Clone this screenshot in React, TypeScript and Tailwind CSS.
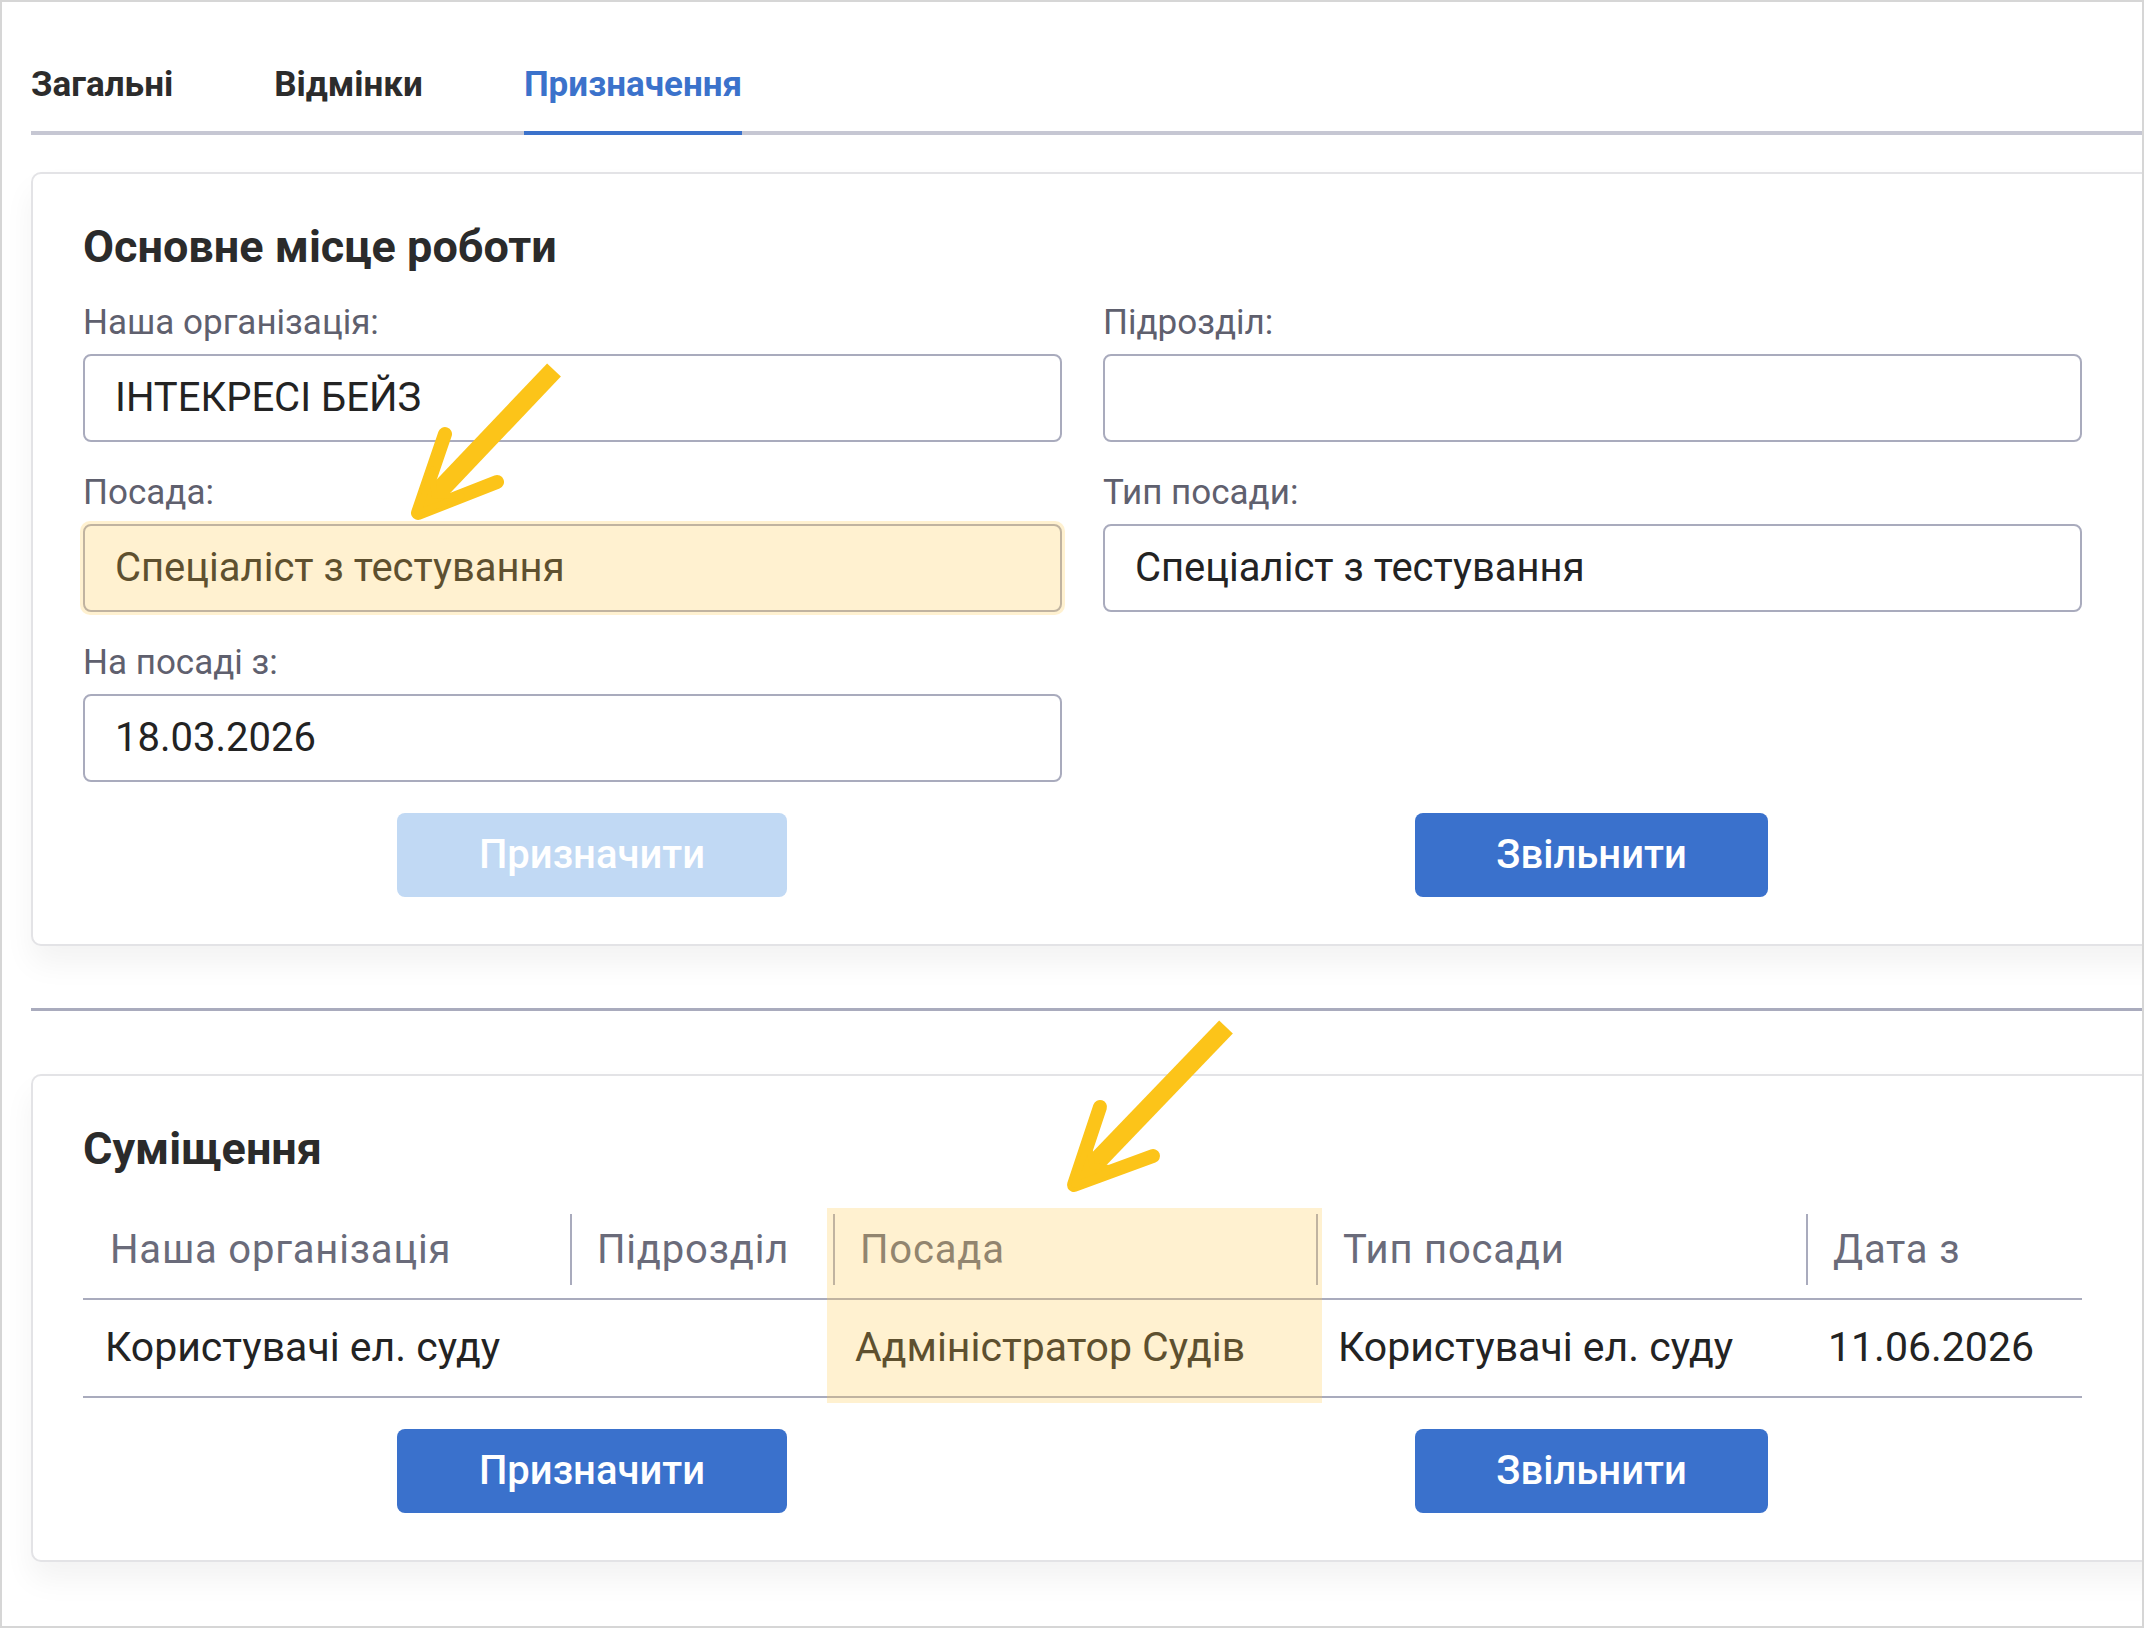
import React from "react";

type Field = { label: string; value: string; marked?: boolean };

function FieldBox({ label, value, marked }: Field) {
  return (
    <div className="flex flex-col">
      <div className="text-[35px] leading-[38px] text-[#5f606e]">{label}</div>
      <div className="relative mt-[12px]">
        <div className="h-[88px] rounded-[8px] border-2 border-[#a9abbd] bg-white px-[30px] flex items-center text-[40px] text-[#232323]">
          {value}
        </div>
        {marked && (
          <div className="absolute -inset-[3px] rounded-[10px] bg-[rgba(255,205,80,0.27)] pointer-events-none" />
        )}
      </div>
    </div>
  );
}

function Buttons({ assignDisabled }: { assignDisabled?: boolean }) {
  return (
    <div className="w-[1999px] flex justify-around">
      <button
        className={
          assignDisabled
            ? "w-[390px] h-[84px] rounded-[8px] bg-[#c1d9f4] text-white text-[40px] font-medium"
            : "w-[390px] h-[84px] rounded-[8px] bg-[#3a71cc] text-white text-[40px] font-medium"
        }
      >
        Призначити
      </button>
      <button className="w-[353px] h-[84px] rounded-[8px] bg-[#3a71cc] text-white text-[40px] font-medium">
        Звільнити
      </button>
    </div>
  );
}

const cols = "grid grid-cols-[487px_263px_483px_490px_276px]";
const heads = ["Наша організація", "Підрозділ", "Посада", "Тип посади", "Дата з"];
const row = ["Користувачі ел. суду", "", "Адміністратор Судів", "Користувачі ел. суду", "11.06.2026"];

function Arrow({ top, tip, left, right }: { top: [number, number]; tip: [number, number]; left: [number, number]; right: [number, number] }) {
  const neck: [number, number] = [tip[0] + (top[0] - tip[0]) * 0.12, tip[1] + (top[1] - tip[1]) * 0.12];
  return (
    <g fill="#fcc419" stroke="#fcc419">
      <path d={`M${top[0]} ${top[1]} L${neck[0]} ${neck[1]}`} strokeWidth={19} strokeLinecap="butt" fill="none" />
      <path
        d={`M${left[0]} ${left[1]} L${tip[0]} ${tip[1]} L${right[0]} ${right[1]}`}
        strokeWidth={14}
        strokeLinecap="round"
        strokeLinejoin="round"
        fill="none"
      />
      <path
        d={`M${tip[0]} ${tip[1]} L${tip[0] + (left[0] - tip[0]) * 0.55} ${tip[1] + (left[1] - tip[1]) * 0.55} L${neck[0]} ${neck[1]} L${tip[0] + (right[0] - tip[0]) * 0.55} ${tip[1] + (right[1] - tip[1]) * 0.55} Z`}
        strokeWidth={6}
        strokeLinejoin="round"
      />
    </g>
  );
}

export default function App() {
  return (
    <div className="relative w-[2144px] h-[1628px] overflow-hidden bg-white border-2 border-[#d6d6d6] font-['Roboto',sans-serif]">
      {/* tabs */}
      <div className="ml-[29px] mt-[65px] flex border-b-4 border-[#c6c7d3]">
        <div className="mr-[101px] -mb-1 pb-[28px] border-b-4 border-transparent text-[35px] leading-[36px] font-bold text-[#2c2c2c]">
          Загальні
        </div>
        <div className="mr-[101px] -mb-1 pb-[28px] border-b-4 border-transparent text-[35px] leading-[36px] font-bold text-[#2c2c2c]">
          Відмінки
        </div>
        <div className="-mb-1 pb-[28px] border-b-4 border-[#3b72cb] text-[35px] leading-[36px] font-bold text-[#3b72cb]">
          Призначення
        </div>
      </div>

      {/* main workplace */}
      <div className="ml-[29px] mt-[37px] w-[2200px] rounded-[10px] border-2 border-[#e3e3e6] bg-white pl-[50px] pt-[49px] pb-[47px] shadow-[0_18px_30px_rgba(0,0,0,0.05)]">
        <h2 className="text-[45px] leading-[48px] font-bold text-[#2b2b2b]">Основне місце роботи</h2>
        <div className="mt-[33px] grid grid-cols-[979px_979px] gap-x-[41px] gap-y-[32px]">
          <FieldBox label="Наша організація:" value="ІНТЕКРЕСІ БЕЙЗ" />
          <FieldBox label="Підрозділ:" value="" />
          <FieldBox label="Посада:" value="Спеціаліст з тестування" marked />
          <FieldBox label="Тип посади:" value="Спеціаліст з тестування" />
          <FieldBox label="На посаді з:" value="18.03.2026" />
          <div />
        </div>
        <div className="mt-[31px]">
          <Buttons assignDisabled />
        </div>
      </div>

      <div className="ml-[29px] mt-[62px] h-[3px] bg-[#a9abbd]" />

      {/* secondary positions */}
      <div className="ml-[29px] mt-[63px] w-[2200px] rounded-[10px] border-2 border-[#e3e3e6] bg-white pl-[50px] pt-[49px] pb-[47px] shadow-[0_18px_30px_rgba(0,0,0,0.05)]">
        <h2 className="text-[45px] leading-[48px] font-bold text-[#2b2b2b]">Суміщення</h2>
        <div className="relative mt-[37px] w-[1999px]">
          <div className={`${cols} h-[90px] border-b-2 border-[#a9abbd]`}>
            {heads.map((h, i) => (
              <div key={h} className="pt-[4px] pb-[13px]">
                <div
                  className={
                    i === 0
                      ? "h-full flex items-center pl-[25px] border-l-2 border-transparent text-[40px] tracking-[0.02em] text-[#6a6b7a]"
                      : "h-full flex items-center pl-[25px] border-l-2 border-[#a9abbd] text-[40px] tracking-[0.02em] text-[#6a6b7a]"
                  }
                >
                  {h}
                </div>
              </div>
            ))}
          </div>
          <div className={`${cols} h-[98px] border-b-2 border-[#a9abbd]`}>
            {row.map((c, i) => (
              <div key={i} className="flex items-center pl-[22px] text-[41px] text-[#232323]">
                {c}
              </div>
            ))}
          </div>
          <div className="absolute left-[744px] -top-[2px] w-[495px] h-[195px] bg-[rgba(255,205,80,0.27)] pointer-events-none" />
        </div>
        <div className="mt-[31px]">
          <Buttons />
        </div>
      </div>

      {/* annotation arrows */}
      <svg className="absolute left-0 top-0 pointer-events-none" width={2144} height={1628} viewBox="0 0 2144 1628">
        <Arrow top={[552, 368]} tip={[416, 511]} left={[443, 432]} right={[495, 480]} />
        <Arrow top={[1224, 1025]} tip={[1072, 1183]} left={[1098, 1105]} right={[1151, 1154]} />
      </svg>
    </div>
  );
}
